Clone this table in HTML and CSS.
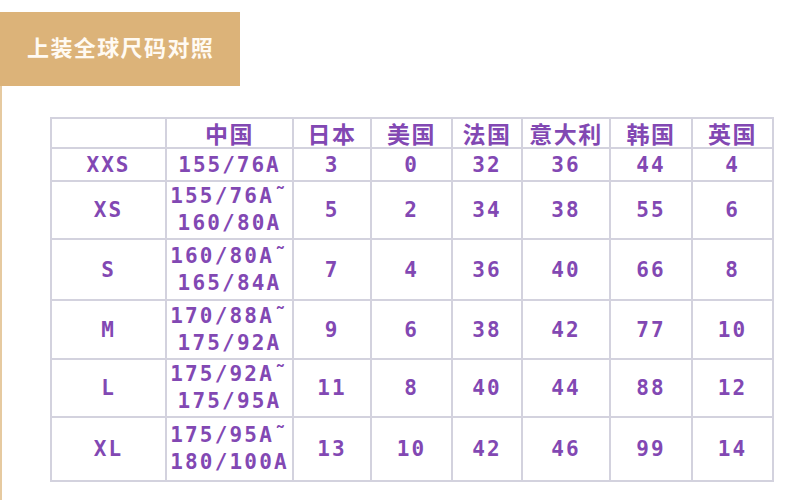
FILE: index.html
```html
<!DOCTYPE html>
<html lang="zh">
<head>
<meta charset="utf-8">
<link rel="stylesheet" href="styles.css">
</head>
<body>
<div class="banner"><span class="banner-title">上装全球尺码对照</span></div>
<div class="content">
<table class="size-table">
<colgroup>
<col class="c0"><col class="c1"><col class="c2"><col class="c3"><col class="c4"><col class="c5"><col class="c6"><col class="c7">
</colgroup>
<tr class="r-head"><th></th><th>中国</th><th>日本</th><th>美国</th><th>法国</th><th>意大利</th><th>韩国</th><th>英国</th></tr>
<tr class="r-xxs"><td>XXS</td><td>155/76A</td><td>3</td><td>0</td><td>32</td><td>36</td><td>44</td><td>4</td></tr>
<tr class="r-xs"><td>XS</td><td class="two">155/76A˜<br>160/80A</td><td>5</td><td>2</td><td>34</td><td>38</td><td>55</td><td>6</td></tr>
<tr class="r-s"><td>S</td><td class="two">160/80A˜<br>165/84A</td><td>7</td><td>4</td><td>36</td><td>40</td><td>66</td><td>8</td></tr>
<tr class="r-m"><td>M</td><td class="two">170/88A˜<br>175/92A</td><td>9</td><td>6</td><td>38</td><td>42</td><td>77</td><td>10</td></tr>
<tr class="r-l"><td>L</td><td class="two">175/92A˜<br>175/95A</td><td>11</td><td>8</td><td>40</td><td>44</td><td>88</td><td>12</td></tr>
<tr class="r-xl"><td>XL</td><td class="two">175/95A˜<br>180/100A</td><td>13</td><td>10</td><td>42</td><td>46</td><td>99</td><td>14</td></tr>
</table>
</div>
</body>
</html>
```
FILE: styles.css
```css
html, body {
  margin: 0;
  padding: 0;
  background: #ffffff;
}
body {
  width: 811px;
  height: 500px;
  overflow: hidden;
}
.banner {
  margin-top: 12px;
  width: 240px;
  height: 74px;
  background: #dcb379;
  display: flex;
  align-items: center;
  padding-left: 27px;
  padding-bottom: 6px;
  box-sizing: border-box;
}
.banner-title {
  font-family: "Noto Sans CJK SC", sans-serif;
  font-weight: 700;
  font-size: 22px;
  color: #fffaf2;
  letter-spacing: 1.4px;
}
.content {
  border-left: 2px solid #e6caa0;
  padding-top: 31px;
  padding-left: 48px;
  height: 420px;
  box-sizing: border-box;
}
.size-table {
  border-collapse: collapse;
  table-layout: fixed;
  width: 724px;
  font-family: "DejaVu Sans Mono", monospace;
  font-weight: 700;
  font-size: 21px;
  color: #8248b3;
  text-align: center;
}
.size-table th, .size-table td {
  border: 2px solid #d3d2de;
  padding: 0;
  text-align: center;
  vertical-align: middle;
}
.size-table td {
  letter-spacing: 2px;
  line-height: 28px;
}
.size-table td.two {
  line-height: 27px;
  letter-spacing: 2.2px;
}
.size-table th {
  font-family: "Noto Sans CJK SC", sans-serif;
  font-weight: 700;
  font-size: 23px;
  line-height: 26px;
  letter-spacing: 1.5px;
}
.c0 { width: 115px; }
.c1 { width: 127px; }
.c2 { width: 78px; }
.c3 { width: 81px; }
.c4 { width: 70px; }
.c5 { width: 88px; }
.c6 { width: 82px; }
.c7 { width: 81px; }
.r-head { height: 30px; }
.r-xxs { height: 33px; }
.r-xs { height: 58px; }
.r-s { height: 61px; }
.r-m { height: 59px; }
.r-l { height: 58px; }
.r-xl { height: 64px; }
```
